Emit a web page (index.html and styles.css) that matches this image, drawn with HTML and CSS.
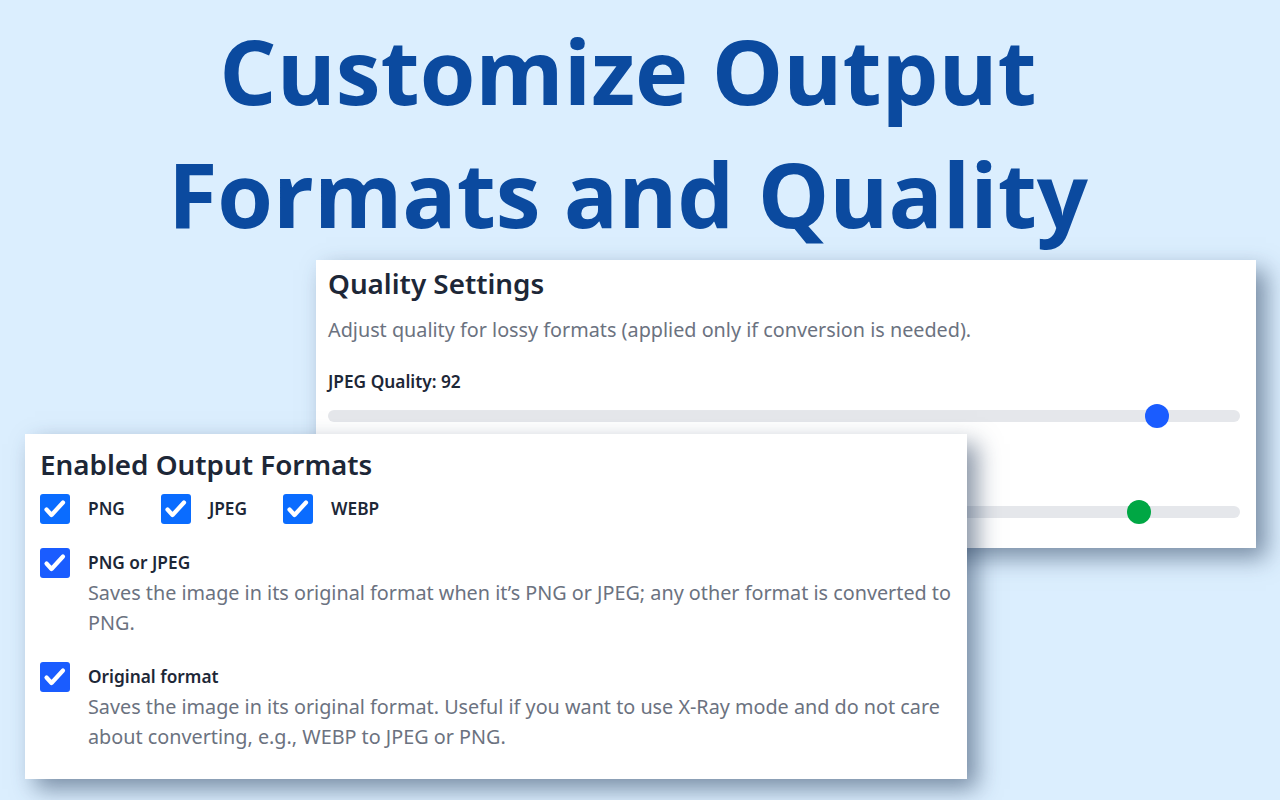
FILE: index.html
```html
<!DOCTYPE html>
<html lang="en">
<head>
<meta charset="utf-8">
<title>Customize Output Formats and Quality</title>
<link rel="stylesheet" href="styles.css">
</head>
<body>
<div class="page">
  <h1 class="title">Customize Output<br>Formats and Quality</h1>
  <div class="stage">
    <section class="card quality">
      <h2 class="card-title">Quality Settings</h2>
      <p class="desc">Adjust quality for lossy formats (applied only if conversion is needed).</p>
      <div class="field">
        <div class="field-label">JPEG Quality: 92</div>
        <div class="track"><span class="thumb blue" style="left: calc((100% - 24px) * 0.92)"></span></div>
      </div>
      <div class="field">
        <div class="field-label">WEBP Quality: 90</div>
        <div class="track"><span class="thumb green" style="left: calc((100% - 24px) * 0.90)"></span></div>
      </div>
    </section>
    <section class="card formats">
      <h2 class="card-title">Enabled Output Formats</h2>
      <div class="row-inline">
        <label class="check"><span class="box light"><svg viewBox="0 0 30 30"><path d="M6.5 15.5l5 5.5 11.5-12.5" /></svg></span><span class="check-label">PNG</span></label>
        <label class="check"><span class="box light"><svg viewBox="0 0 30 30"><path d="M6.5 15.5l5 5.5 11.5-12.5" /></svg></span><span class="check-label">JPEG</span></label>
        <label class="check"><span class="box light"><svg viewBox="0 0 30 30"><path d="M6.5 15.5l5 5.5 11.5-12.5" /></svg></span><span class="check-label">WEBP</span></label>
      </div>
      <div class="option">
        <span class="box"><svg viewBox="0 0 30 30"><path d="M6.5 15.5l5 5.5 11.5-12.5" /></svg></span>
        <div class="option-body">
          <div class="check-label">PNG or JPEG</div>
          <p class="desc">Saves the image in its original format when it’s PNG or JPEG; any other format is converted to PNG.</p>
        </div>
      </div>
      <div class="option">
        <span class="box"><svg viewBox="0 0 30 30"><path d="M6.5 15.5l5 5.5 11.5-12.5" /></svg></span>
        <div class="option-body">
          <div class="check-label">Original format</div>
          <p class="desc">Saves the image in its original format. Useful if you want to use X-Ray mode and do not care about converting, e.g., WEBP to JPEG or PNG.</p>
        </div>
      </div>
    </section>
  </div>
</div>
</body>
</html>
```
FILE: styles.css
```css
* { box-sizing: border-box; }
html, body { margin: 0; padding: 0; }
body {
  width: 1280px;
  height: 800px;
  overflow: hidden;
  background: #dbeefe;
  font-family: "Noto Sans", "Open Sans", sans-serif;
}
.page { position: relative; width: 1280px; height: 800px; }
.title {
  margin: 0;
  padding: 9px 24px 0 0;
  text-align: center;
  font-family: "Open Sans", sans-serif;
  font-weight: 700;
  font-size: 90px;
  line-height: 123px;
  color: #0b4a9f;
}
.stage { position: absolute; left: 0; top: 0; width: 1280px; height: 800px; }
.card {
  position: absolute;
  background: #fff;
  box-shadow: 10px 10px 22px rgba(40, 62, 92, 0.55);
}
.quality { left: 316px; top: 260px; width: 940px; height: 288px; padding: 2px 16px 0 12px; }
.formats { left: 25px; top: 434px; width: 942px; height: 345px; padding: 9px 15px 0 15px; }
.card-title {
  margin: 0;
  font-size: 27.8px;
  font-weight: 600;
  line-height: 42px;
  color: #1d2737;
}
.desc {
  margin: 0;
  font-size: 19.8px;
  line-height: 30px;
  color: #6b7280;
}
.quality .desc { margin-top: 11px; }
.field { margin-top: 25px; }
.field-label { font-size: 17.3px; font-weight: 600; color: #1d2737; line-height: 24px; }
.track {
  position: relative;
  margin-top: 16px;
  height: 12px;
  border-radius: 6px;
  background: #e5e7eb;
}
.thumb {
  position: absolute;
  top: -6px;
  width: 24px;
  height: 24px;
  border-radius: 50%;
}
.thumb.blue { background: #1a5cff; }
.thumb.green { background: #00a744; }
.quality .field + .field { margin-top: 44px; }
.row-inline { display: flex; margin-top: 9px; }
.check { display: flex; align-items: center; margin-right: 36px; }
.box {
  flex: none;
  width: 30px;
  height: 30px;
  border-radius: 3px;
  background: #1a5cff;
  display: inline-flex;
}
.box.light { background: #0a6cff; }
.box svg { width: 30px; height: 30px; fill: none; stroke: #fff; stroke-width: 4.2; stroke-linecap: round; stroke-linejoin: round; }
.check-label { font-size: 17.3px; font-weight: 600; color: #1d2737; margin-left: 18px; line-height: 30px; }
.option { display: flex; align-items: flex-start; margin-top: 24px; }
.option-body { display: flex; flex-direction: column; }
.option-body .desc { margin-left: 18px; }
```
